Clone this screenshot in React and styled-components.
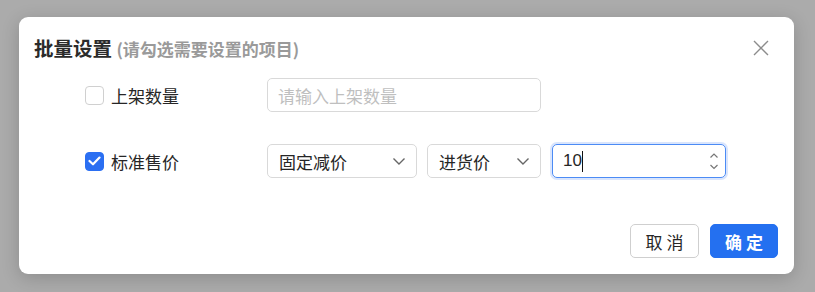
import styled, { createGlobalStyle } from "styled-components"

const Global = createGlobalStyle`
    html, body {
        margin: 0;
        padding: 0;
        background: #ababab;
        font-family: "Noto Sans CJK SC", "Noto Sans", sans-serif;
    }
`

const marks = [
    { text: '18368404677467', left: 20, top: 70 },
    { text: '18368404677467', left: 230, top: 40 },
    { text: '7352', left: 390, top: 70 },
    { text: '18368404677467', left: 200, top: 210 },
    { text: '7352', left: 30, top: 215 },
    { text: '7352', left: 320, top: 205 },
]

export default function App(){
    return(
        <>
            <Global />
            <Page>
                <Dialog>
                    {marks.map((m, i) => (
                        <Mark key={i} style={{ left: m.left, top: m.top }}>{m.text}</Mark>
                    ))}
                    <Header>
                        <Title>批量设置 <Hint>(请勾选需要设置的项目)</Hint></Title>
                        <Close aria-label="close">
                            <svg width="16" height="16" viewBox="0 0 16 16">
                                <path d="M1 1 L15 15 M15 1 L1 15" stroke="#8c8c8c" strokeWidth="1.4" fill="none"/>
                            </svg>
                        </Close>
                    </Header>
                    <Body>
                        <Row>
                            <Check>
                                <Box />
                                <Label>上架数量</Label>
                            </Check>
                            <Input width="274px" placeholder="请输入上架数量" />
                        </Row>
                        <Row>
                            <Check>
                                <Box checked>
                                    <svg width="13" height="10" viewBox="0 0 13 10">
                                        <path d="M1.5 5 L5 8.3 L11.5 1.6" stroke="#fff" strokeWidth="2.2" fill="none" strokeLinecap="round" strokeLinejoin="round"/>
                                    </svg>
                                </Box>
                                <Label>标准售价</Label>
                            </Check>
                            <Controls>
                                <Select width="150px">
                                    固定减价
                                    <Chevron />
                                </Select>
                                <Select width="114px">
                                    进货价
                                    <Chevron />
                                </Select>
                                <NumberBox>
                                    <span>10</span><Caret />
                                    <Spin>
                                        <svg width="10" height="22" viewBox="0 0 10 22">
                                            <path d="M1.5 7.5 L5 4 L8.5 7.5" stroke="#777" strokeWidth="1.2" fill="none"/>
                                            <path d="M1.5 15 L5 18.5 L8.5 15" stroke="#777" strokeWidth="1.2" fill="none"/>
                                        </svg>
                                    </Spin>
                                </NumberBox>
                            </Controls>
                        </Row>
                    </Body>
                    <Footer>
                        <Button>取&nbsp;消</Button>
                        <Button primary>确&nbsp;定</Button>
                    </Footer>
                </Dialog>
            </Page>
        </>
    )
}

function Chevron(){
    return(
        <svg width="14" height="9" viewBox="0 0 14 9">
            <path d="M1.5 1.5 L7 7 L12.5 1.5" stroke="#666" strokeWidth="1.4" fill="none"/>
        </svg>
    )
}

const Page = styled.div`
    height: 292px;
    padding: 17px 0 0 19px;
    box-sizing: border-box;
`
const Dialog = styled.div`
    position: relative;
    overflow: hidden;
    width: 775px;
    height: 257px;
    background: #fff;
    border-radius: 9px;
    box-shadow: 0 4px 18px rgba(0, 0, 0, 0.18);
    display: flex;
    flex-direction: column;
    box-sizing: border-box;
    padding: 17px 16px 16px 15px;
`
const Mark = styled.div`
    position: absolute;
    font-family: "Liberation Sans", sans-serif;
    font-size: 16px;
    color: rgba(0, 0, 0, 0.018);
    transform: rotate(-28deg);
    white-space: nowrap;
    pointer-events: none;
`
const Header = styled.div`
    display: flex;
    align-items: center;
    justify-content: space-between;
    height: 28px;
`
const Title = styled.h2`
    margin: 0;
    font-size: 19.5px;
    font-weight: 700;
    color: #2b2b2b;
    line-height: 28px;
`
const Hint = styled.span`
    font-size: 17px;
    color: #9a9a9a;
`
const Close = styled.button`
    border: none;
    background: none;
    padding: 0;
    margin-right: 9px;
    display: flex;
`
const Body = styled.div`
    display: flex;
    flex-direction: column;
    gap: 32px;
    margin-top: 16px;
    padding-left: 51px;
`
const Row = styled.div`
    display: flex;
    align-items: center;
`
const Check = styled.label`
    display: flex;
    align-items: center;
    gap: 7px;
    width: 182px;
`
const Box = styled.span`
    width: 19px;
    height: 19px;
    box-sizing: border-box;
    border-radius: 4px;
    border: 1px solid ${props => props.checked ? '#2b6ff2' : '#d0d0d0'};
    background: ${props => props.checked ? '#2b6ff2' : '#fff'};
    display: flex;
    align-items: center;
    justify-content: center;
`
const Label = styled.span`
    font-size: 17px;
    color: #262626;
`
const Input = styled.input`
    width: ${props => props.width};
    height: 34px;
    box-sizing: border-box;
    border: 1px solid #d9d9d9;
    border-radius: 5px;
    padding: 0 10px;
    font-family: inherit;
    font-size: 17px;
    outline: none;
    &::placeholder {
        color: #bfbfbf;
    }
`
const Controls = styled.div`
    display: flex;
    gap: 10px;
`
const Select = styled.div`
    width: ${props => props.width};
    height: 34px;
    box-sizing: border-box;
    border: 1px solid #d9d9d9;
    border-radius: 5px;
    padding: 0 10px 0 11px;
    display: flex;
    align-items: center;
    justify-content: space-between;
    font-size: 17px;
    color: #262626;
`
const NumberBox = styled.div`
    width: 174px;
    height: 34px;
    margin-left: 1px;
    box-sizing: border-box;
    border: 1px solid #4c8bf5;
    border-radius: 5px;
    box-shadow: 0 0 0 2px rgba(43, 111, 242, 0.18);
    padding: 0 0 0 10px;
    display: flex;
    align-items: center;
    font-family: "Liberation Sans", sans-serif;
    font-size: 17px;
    color: #262626;
`
const Caret = styled.span`
    width: 1px;
    height: 21px;
    background: #111;
`
const Spin = styled.span`
    margin-left: auto;
    margin-right: 6px;
    display: flex;
`
const Footer = styled.div`
    margin-top: auto;
    display: flex;
    justify-content: flex-end;
    gap: 11px;
`
const Button = styled.button`
    height: 34px;
    width: ${props => props.primary ? '68px' : '69px'};
    box-sizing: border-box;
    border-radius: 5px;
    border: 1px solid ${props => props.primary ? '#2470f0' : '#cfcfcf'};
    background: ${props => props.primary ? '#2470f0' : '#fff'};
    color: ${props => props.primary ? '#fff' : '#262626'};
    font-family: "Noto Sans CJK SC", sans-serif;
    font-size: 17px;
    font-weight: ${props => props.primary ? 700 : 400};
    padding: 0;
`
